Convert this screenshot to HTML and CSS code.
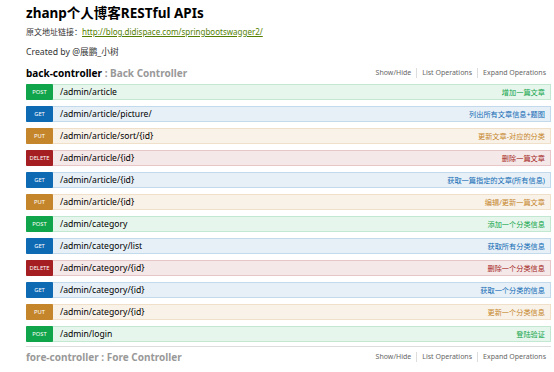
FILE: index.html
```html
<!DOCTYPE html>
<html lang="en">

<head>
    <meta charset="UTF-8" />
    <meta name="viewport" content="width=device-width, initial-scale=1.0" />
    <link rel="stylesheet" href="styles.css">
</head>

<body>
    <div class="container">
        <div class="info">
            <h1 class="title">zhanp个人博客RESTful APIs</h1>
            <p class="desc">原文地址链接：<a href="#">http://blog.didispace.com/springbootswagger2/</a></p>
            <p class="author">Created by @展鹏_小树</p>
        </div>

        <div class="resource">
            <div class="resource-head">
                <h2><span class="name">back-controller</span> <span class="sub">: Back Controller</span></h2>
                <ul class="options">
                    <li>Show/Hide</li>
                    <li>List Operations</li>
                    <li>Expand Operations</li>
                </ul>
            </div>

            <ul class="endpoints">
                <li class="op post"><span class="method">POST</span><span class="path">/admin/article</span><span class="summary">增加一篇文章</span></li>
                <li class="op get"><span class="method">GET</span><span class="path">/admin/article/picture/</span><span class="summary">列出所有文章信息+题图</span></li>
                <li class="op put"><span class="method">PUT</span><span class="path">/admin/article/sort/{id}</span><span class="summary">更新文章-对应的分类</span></li>
                <li class="op delete"><span class="method">DELETE</span><span class="path">/admin/article/{id}</span><span class="summary">删除一篇文章</span></li>
                <li class="op get"><span class="method">GET</span><span class="path">/admin/article/{id}</span><span class="summary">获取一篇指定的文章(所有信息)</span></li>
                <li class="op put"><span class="method">PUT</span><span class="path">/admin/article/{id}</span><span class="summary">编辑/更新一篇文章</span></li>
                <li class="op post"><span class="method">POST</span><span class="path">/admin/category</span><span class="summary">添加一个分类信息</span></li>
                <li class="op get"><span class="method">GET</span><span class="path">/admin/category/list</span><span class="summary">获取所有分类信息</span></li>
                <li class="op delete"><span class="method">DELETE</span><span class="path">/admin/category/{id}</span><span class="summary">删除一个分类信息</span></li>
                <li class="op get"><span class="method">GET</span><span class="path">/admin/category/{id}</span><span class="summary">获取一个分类的信息</span></li>
                <li class="op put"><span class="method">PUT</span><span class="path">/admin/category/{id}</span><span class="summary">更新一个分类信息</span></li>
                <li class="op post"><span class="method">POST</span><span class="path">/admin/login</span><span class="summary">登陆验证</span></li>
            </ul>
        </div>

        <div class="resource collapsed">
            <div class="resource-head">
                <h2><span class="name">fore-controller</span> <span class="sub">: Fore Controller</span></h2>
                <ul class="options">
                    <li>Show/Hide</li>
                    <li>List Operations</li>
                    <li>Expand Operations</li>
                </ul>
            </div>
        </div>
    </div>
</body>

</html>
```

FILE: styles.css
```css
body {
    font-family: 'Noto Sans', 'Noto Sans CJK SC', sans-serif;
    margin: 0;
    background-color: #fff;
    color: #000;
}

.container {
    padding: 0 3px 0 26px;
}

.title {
    font-size: 13.5px;
    font-weight: bold;
    margin: 0;
    padding-top: 3px;
    line-height: 20px;
}

.desc,
.author {
    color: #333;
    margin: 0;
    line-height: 12px;
}

.desc {
    font-size: 8px;
    margin-top: 3px;
}

.desc a {
    color: #547f00;
}

.author {
    font-size: 8.7px;
    margin-top: 8px;
}

.resource-head {
    display: flex;
    justify-content: space-between;
    align-items: center;
    height: 16px;
    margin-top: 7px;
    margin-bottom: 3px;
}

.resource-head h2 {
    font-size: 10px;
    font-weight: bold;
    margin: 0;
}

.resource-head .sub {
    color: #999;
}

.collapsed {
    border-top: 1px solid #ddd;
    margin-top: 4px;
    padding-top: 2px;
}

.collapsed .resource-head {
    margin-top: 0;
}

.collapsed .resource-head h2 .name {
    color: #999;
}

.options {
    list-style: none;
    margin: 0;
    padding: 0 5px 0 0;
    display: flex;
    font-size: 7px;
    color: #666;
}

.options li {
    padding: 0 5px;
    border-left: 1px solid #ddd;
    line-height: 10px;
}

.options li:first-child {
    border-left: none;
}

.options li:last-child {
    padding-right: 0;
}

.endpoints {
    list-style: none;
    margin: 0;
    padding: 0;
    display: flex;
    flex-direction: column;
    gap: 6px;
}

.op {
    display: flex;
    align-items: center;
    height: 14px;
    border: 1px solid;
    border-left: none;
}

.method {
    width: 27px;
    height: 16px;
    margin-top: -1px;
    margin-bottom: -1px;
    display: flex;
    align-items: center;
    justify-content: center;
    color: #fff;
    font-size: 5.8px;
    border-radius: 1px;
}

.path {
    flex: 1;
    font-size: 8.6px;
    padding-left: 7px;
    color: #000;
}

.summary {
    font-size: 7.2px;
    padding-right: 5px;
}

.post {
    background-color: #e7f6ec;
    border-color: #c3e8d1;
}

.post .method {
    background-color: #10a54a;
}

.post .summary {
    color: #10a54a;
}

.get {
    background-color: #e7f0f7;
    border-color: #c3d9ec;
}

.get .method {
    background-color: #0f6ab4;
}

.get .summary {
    color: #0f6ab4;
}

.put {
    background-color: #f9f2e9;
    border-color: #f0e0ca;
}

.put .method {
    background-color: #c5862b;
}

.put .summary {
    color: #c5862b;
}

.delete {
    background-color: #f5e8e8;
    border-color: #e8c6c7;
}

.delete .method {
    background-color: #a41e22;
}

.delete .summary {
    color: #a41e22;
}
```
